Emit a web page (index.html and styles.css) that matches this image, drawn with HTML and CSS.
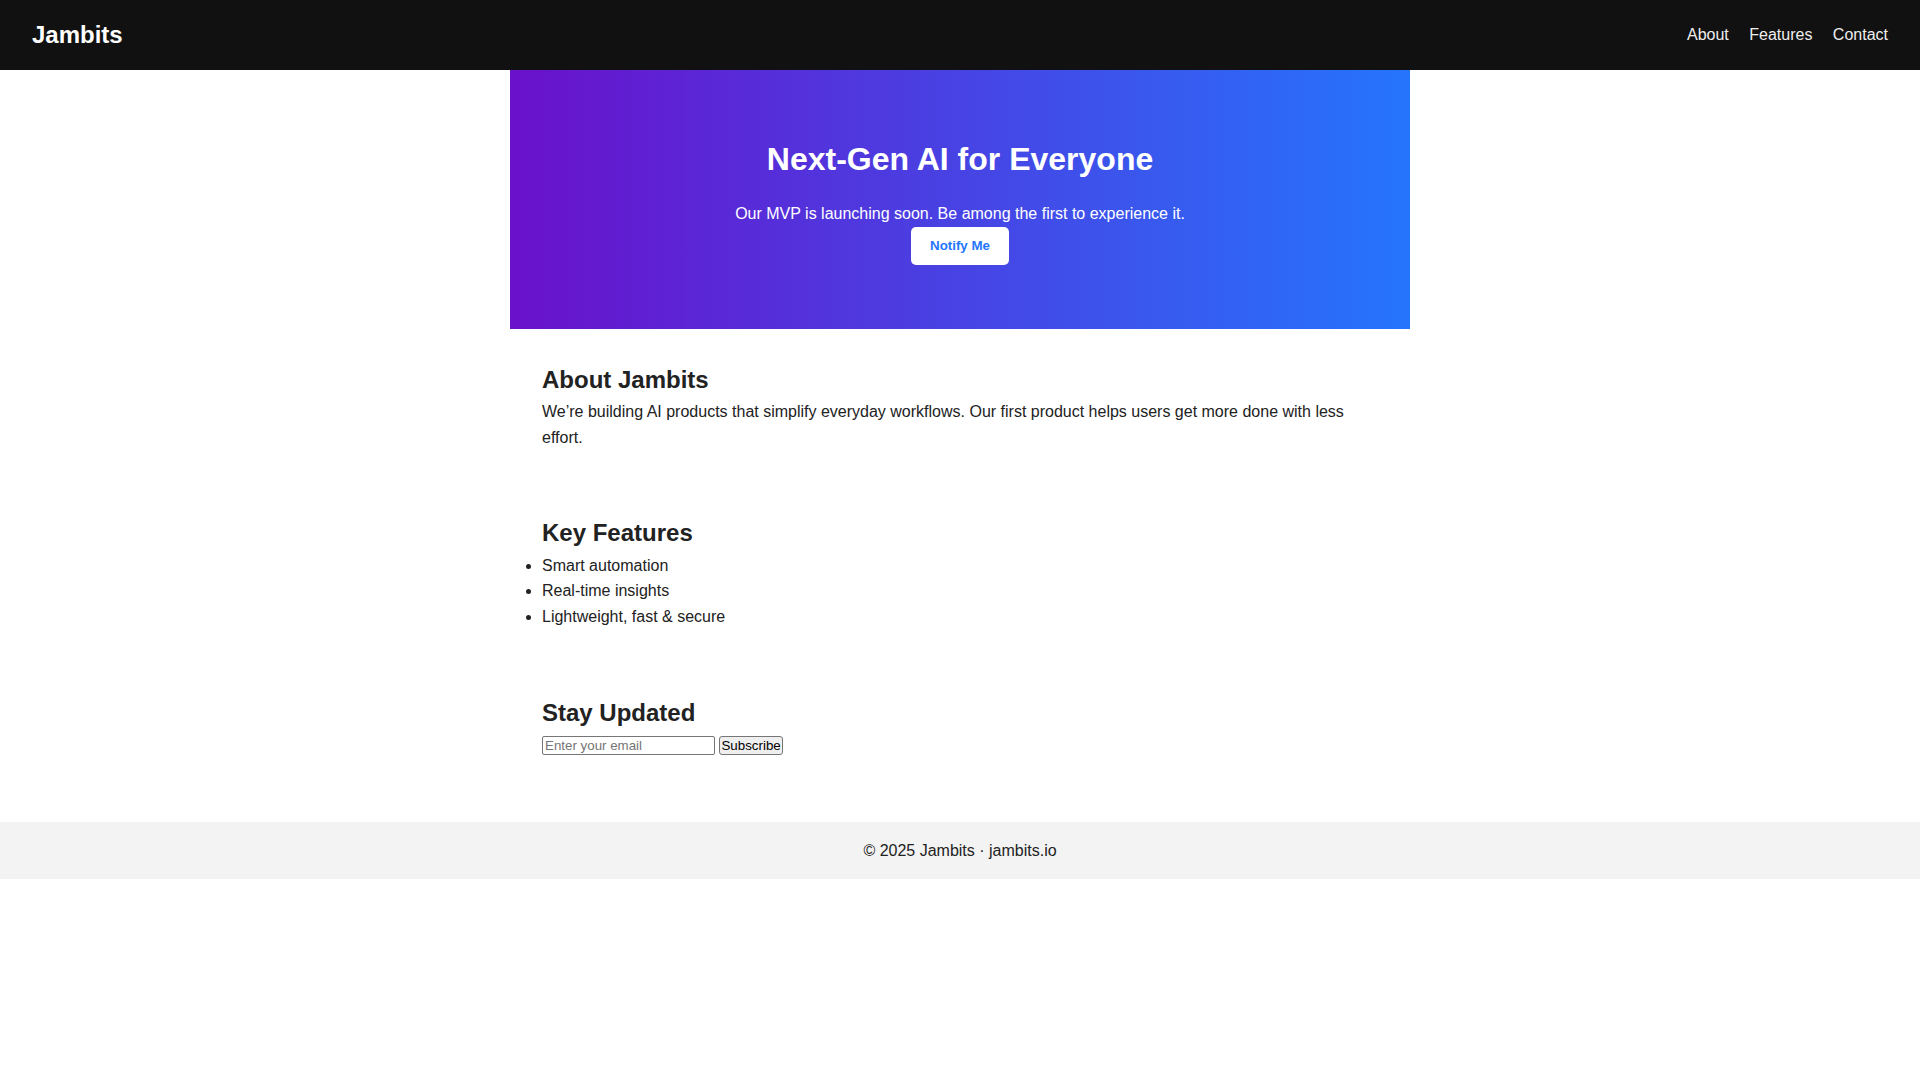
FILE: index.html
```html
<!DOCTYPE html>
<html lang="en">
<head>
<meta charset="utf-8">
<title>Jambits</title>
<link rel="stylesheet" href="styles.css">
</head>
<body>
<header class="topbar">
  <div class="logo">Jambits</div>
  <nav class="links">
    <a href="#about">About</a>
    <a href="#features">Features</a>
    <a href="#contact">Contact</a>
  </nav>
</header>
<main class="container">
  <section class="hero">
    <h1>Next-Gen AI for Everyone</h1>
    <p>Our MVP is launching soon. Be among the first to experience it.</p>
    <div class="hero-actions"><button class="notify">Notify Me</button></div>
  </section>
  <section class="block" id="about">
    <h2>About Jambits</h2>
    <p>We’re building AI products that simplify everyday workflows. Our first product helps users get more done with less effort.</p>
  </section>
  <section class="block" id="features">
    <h2>Key Features</h2>
    <ul class="features">
      <li>Smart automation</li>
      <li>Real-time insights</li>
      <li>Lightweight, fast &amp; secure</li>
    </ul>
  </section>
  <section class="block" id="contact">
    <h2>Stay Updated</h2>
    <form class="signup">
      <input class="email" type="email" placeholder="Enter your email">
      <button class="subscribe" type="submit">Subscribe</button>
    </form>
  </section>
</main>
<footer class="footer">© 2025 Jambits · jambits.io</footer>
</body>
</html>
```
FILE: styles.css
```css
html, body {
  margin: 0;
  padding: 0;
}
body {
  font-family: "Liberation Sans", Arial, sans-serif;
  font-size: 16px;
  line-height: 1.6;
  color: #222;
  background: #fff;
}
.topbar {
  height: 70px;
  background: #111;
  color: #fff;
  display: flex;
  align-items: center;
  justify-content: space-between;
  padding: 0 2rem;
}
.logo {
  font-size: 24px;
  font-weight: bold;
}
.links a {
  color: #eee;
  text-decoration: none;
  margin-left: 1rem;
}
.container {
  max-width: 900px;
  margin: 0 auto;
}
.hero {
  background: linear-gradient(to right, #6a11cb, #2575fc);
  color: #fff;
  text-align: center;
  padding: 4rem 2rem;
}
.hero h1 {
  font-size: 32px;
  margin: 0 0 1rem;
}
.hero p {
  margin: 0;
}
.hero-actions {
  display: flex;
  justify-content: center;
}
.notify {
  font-family: "Liberation Sans", Arial, sans-serif;
  font-size: 13.333px;
  font-weight: bold;
  line-height: normal;
  color: #2575fc;
  background: #fff;
  border: none;
  border-radius: 5px;
  padding: 0.72rem 1.2rem;
}
.block {
  padding: 2rem;
}
.block h2 {
  font-size: 24px;
  margin: 0;
}
.block p {
  margin: 0;
}
.features {
  margin: 0;
  padding-left: 0;
  list-style-position: outside;
}
.signup {
  margin: 0;
}
.email {
  font-family: "Liberation Sans", Arial, sans-serif;
  font-size: 13.333px;
  line-height: normal;
  width: 167px;
  padding: 1px 2px;
  border: 1px solid #767676;
  border-radius: 2px;
  color: #222;
  background: #fff;
  vertical-align: middle;
}
.email::placeholder {
  color: #757575;
}
.subscribe {
  font-family: "Liberation Sans", Arial, sans-serif;
  font-size: 13.333px;
  font-weight: normal;
  line-height: normal;
  color: #000;
  padding: 1px 1px;
  border: 1px solid #767676;
  border-radius: 3px;
  background: #efefef;
  vertical-align: middle;
}
.footer {
  margin-top: 2rem;
  background: #f3f3f3;
  text-align: center;
  padding: 1rem;
}
```
